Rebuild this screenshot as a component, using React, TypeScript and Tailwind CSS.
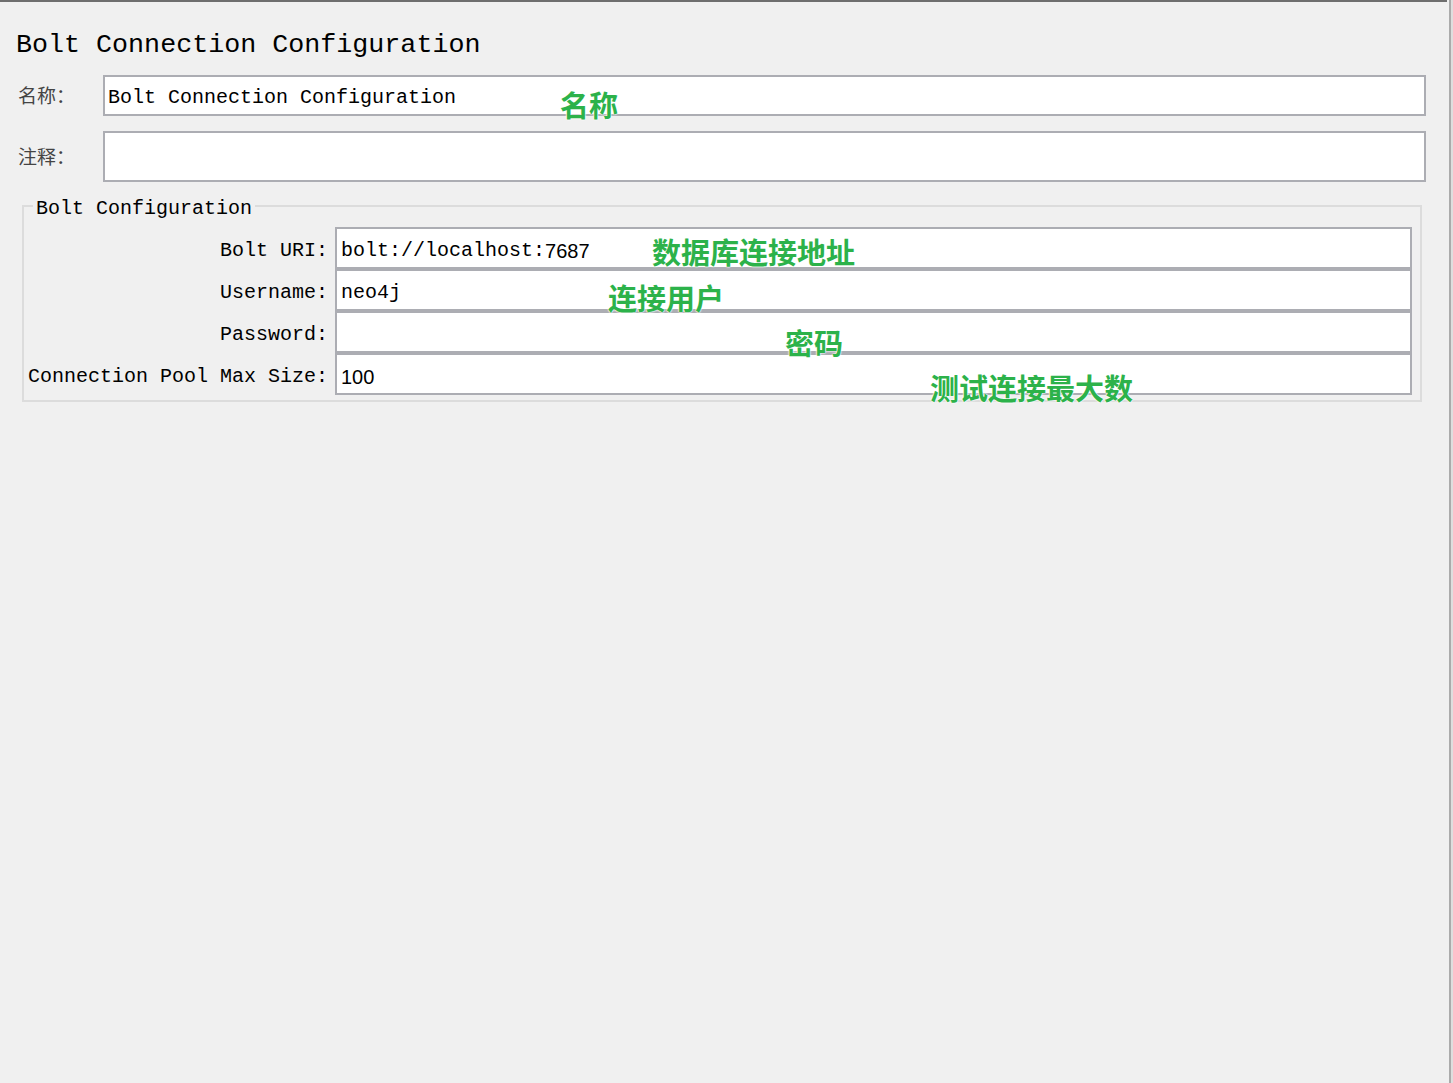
import React from 'react';

const MONO = "font-['Liberation_Mono','DejaVu_Sans_Mono',monospace]";
const CJK = "font-['Noto_Sans_CJK_SC','Noto_Sans',sans-serif]";
const SANS = "font-['Liberation_Sans','Noto_Sans_CJK_SC',sans-serif]";

const BOLT_ROWS = [
  { label: 'Bolt URI:', value: <><span>bolt://localhost:</span><span className={SANS}>7687</span></> },
  { label: 'Username:', value: <span>neo4j</span> },
  { label: 'Password:', value: null },
  { label: 'Connection Pool Max Size:', value: <span className={SANS}>100</span> },
];

const NOTES = [
  { text: '名称', left: 560, top: 90 },
  { text: '数据库连接地址', left: 652, top: 237 },
  { text: '连接用户', left: 608, top: 283 },
  { text: '密码', left: 785, top: 328 },
  { text: '测试连接最大数', left: 930, top: 373 },
];

function Note({ text, left, top }: { text: string; left: number; top: number }) {
  return (
    <div
      className={`absolute ${CJK} text-[29px] leading-none font-bold text-[#2cb24a] whitespace-nowrap [text-shadow:0_0_2px_#ffffff,0_0_2px_#ffffff,0_0_1px_#ffffff]`}
      style={{ left, top }}
    >
      {text}
    </div>
  );
}

export default function App() {
  return (
    <div className="relative flex w-[1453px] h-[1083px] bg-[#f0f0f0] overflow-hidden">
      <div className="w-[1447px] h-full border-t-2 border-[#6e6e6e]">
        {/* Title */}
        <div className={`${MONO} mt-[25px] pl-[16px] h-[36px] leading-[36px] text-[26.7px] text-black whitespace-nowrap`}>
          Bolt Connection Configuration
        </div>

        {/* 名称 */}
        <div className="flex items-center mt-[12px] pl-[18px] pr-[21px] h-[41px]">
          <div className={`${CJK} w-[85px] text-[19px] text-[#444]`}>名称：</div>
          <div className={`${MONO} flex-1 h-full flex items-center bg-white border-2 border-[#acadb3] pl-[3px] pt-[5px] text-[20px] text-black whitespace-nowrap`}>
            Bolt Connection Configuration
          </div>
        </div>

        {/* 注释 */}
        <div className="flex items-center mt-[15px] pl-[18px] pr-[21px] h-[51px]">
          <div className={`${CJK} w-[85px] text-[19px] text-[#444]`}>注释：</div>
          <div className="flex-1 h-full bg-white border-2 border-[#acadb3]" />
        </div>

        {/* Bolt Configuration group */}
        <div className="relative ml-[22px] mt-[23px] w-[1400px] border-2 border-[#dcdcdc] pt-[20px] pb-[5px] pr-[8px]">
          <div className={`${MONO} absolute left-[9px] -top-[10px] px-[3px] bg-[#f0f0f0] text-[20px] leading-[24px] text-black whitespace-nowrap`}>
            Bolt Configuration
          </div>
          {BOLT_ROWS.map((row) => (
            <div key={row.label} className="flex h-[42px]">
              <div className={`${MONO} w-[311px] pr-[7px] pt-[5px] flex items-center justify-end text-[20px] text-black whitespace-nowrap`}>
                {row.label}
              </div>
              <div className={`${MONO} flex-1 flex items-center bg-white border-2 border-[#acadb3] pl-[4px] pt-[5px] text-[20px] text-black whitespace-nowrap`}>
                {row.value}
              </div>
            </div>
          ))}
        </div>
      </div>

      {/* window edge */}
      <div className="w-[2px] h-full bg-[#f0f0f0]" />
      <div className="w-[2px] h-full bg-[#ababab]" />
      <div className="w-[2px] h-full bg-[#dedede]" />

      {NOTES.map((n) => (
        <Note key={n.text} {...n} />
      ))}
    </div>
  );
}
